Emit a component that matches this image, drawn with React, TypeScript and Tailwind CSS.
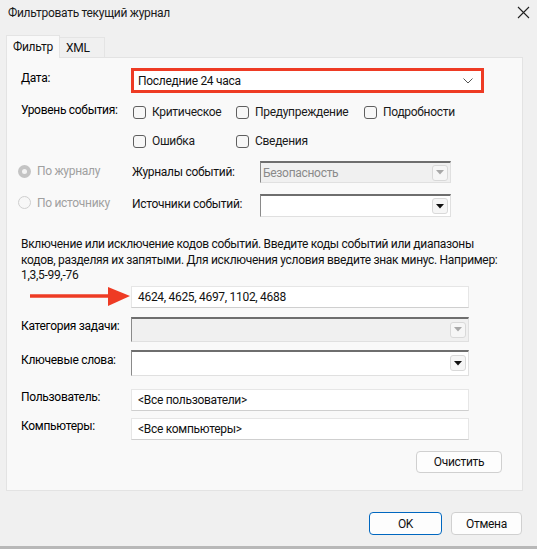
import React from "react";

const font = { fontFamily: 'Roboto, "Noto Sans", sans-serif' };

function Checkbox({ label }: { label: string }) {
  return (
    <div className="flex items-center">
      <div className="w-[13px] h-[13px] rounded-[3px] border border-[#5f5f5f] bg-[#f7f7f7] ml-[3px]" />
      <span className="ml-[6px] text-[#1a1a1a]">{label}</span>
    </div>
  );
}

function ArrowBtn({ disabled }: { disabled?: boolean }) {
  return (
    <div className="w-[16px] h-[16px] rounded-[3px] border border-[#d9d9d9] bg-[#f6f6f6] flex items-center justify-center mr-[2px]">
      <svg width="8" height="5" viewBox="0 0 8 5">
        <path d="M0 0 L8 0 L4 4.5 Z" fill={disabled ? "#a8a8a8" : "#111"} />
      </svg>
    </div>
  );
}

function Combo({ text, disabled, w, h }: { text?: string; disabled?: boolean; w: string; h: string }) {
  return (
    <div
      className={`${w} ${h} flex items-center justify-between border border-[#e0e0e0] border-t-[2px] border-t-[#6e6e6e] border-l-[#8a8a8a] ${
        disabled ? "bg-[#f0f0f0]" : "bg-white"
      }`}
    >
      <span className={`pl-[2px] ${disabled ? "text-[#8a8a8a]" : "text-[#111]"}`}>{text}</span>
      <ArrowBtn disabled={disabled} />
    </div>
  );
}

function TextBox({ text, h }: { text: string; h: string }) {
  return (
    <div className={`w-[338px] ${h} bg-white border border-[#e6e6e6] border-b-[#cfcfcf] flex items-center pl-[6px] text-[#111]`}>
      {text}
    </div>
  );
}

export default function App() {
  return (
    <div className="w-[537px] h-[549px] bg-[#f0f0f0] text-[12px] tracking-[-0.3px] text-black relative overflow-hidden" style={font}>
      {/* title bar */}
      <div className="h-[29px] flex items-center justify-between pl-[8px] pr-[7px]">
        <span className="text-[12px] text-[#1a1a1a] -mt-[4px]">Фильтровать текущий журнал</span>
        <svg width="13" height="13" viewBox="0 0 13 13" className="-mt-[5px]">
          <path d="M1 1 L12 12 M12 1 L1 12" stroke="#222" strokeWidth="1.1" />
        </svg>
      </div>

      {/* tabs */}
      <div className="flex items-end h-[28px] pl-[6px]">
        <div className="h-[23px] w-[54px] bg-[#f9f9f9] border border-[#e4e4e4] border-b-0 flex items-center justify-center text-[#111] relative z-10 -mb-px">
          Фильтр
        </div>
        <div className="h-[20px] w-[45px] bg-[#f0f0f0] border border-[#e4e4e4] border-b-0 border-l-0 flex items-center pl-[6px] text-[#111]">
          XML
        </div>
      </div>

      {/* panel */}
      <div className="ml-[6px] w-[517px] h-[434px] border border-[#e3e3e3] bg-[#f9f9f9] pl-[14px] flex flex-col">
        {/* date */}
        <div className="flex items-center mt-[10px] h-[25px]">
          <span className="w-[110px] -mt-[6px]">Дата:</span>
          <div className="w-[353px] h-[25px] border-[3px] border-[#ee3b24] bg-white flex items-center justify-between pl-[4px] pr-[8px]">
            <span className="text-[#111]">Последние 24 часа</span>
            <svg width="10" height="6" viewBox="0 0 10 6">
              <path d="M0.5 0.5 L5 5 L9.5 0.5" stroke="#555" strokeWidth="1" fill="none" />
            </svg>
          </div>
        </div>

        {/* level row 1 */}
        <div className="flex items-center mt-[9px] h-[20px]">
          <span className="w-[109px] -mt-[4px]">Уровень события:</span>
          <div className="w-[103px]"><Checkbox label="Критическое" /></div>
          <div className="w-[128px]"><Checkbox label="Предупреждение" /></div>
          <Checkbox label="Подробности" />
        </div>
        {/* level row 2 */}
        <div className="flex items-center mt-[9px] h-[20px]">
          <span className="w-[109px]" />
          <div className="w-[103px]"><Checkbox label="Ошибка" /></div>
          <Checkbox label="Сведения" />
        </div>

        {/* radio row 1 */}
        <div className="flex items-center mt-[10px] h-[22px]">
          <div className="w-[114px] flex items-center -ml-[3px] -mt-[2px]">
            <div className="w-[13px] h-[13px] rounded-full bg-[#c4c4c4] flex items-center justify-center">
              <div className="w-[5px] h-[5px] rounded-full bg-[#f4f4f4]" />
            </div>
            <span className="ml-[6px] text-[#a0a0a0]">По журналу</span>
          </div>
          <span className="w-[128px] text-[#111]">Журналы событий:</span>
          <Combo text="Безопасность" disabled w="w-[191px]" h="h-[22px]" />
        </div>

        {/* radio row 2 */}
        <div className="flex items-center mt-[11px] h-[23px]">
          <div className="w-[114px] flex items-center -ml-[3px] -mt-[6px]">
            <div className="w-[13px] h-[13px] rounded-full border border-[#cfcfcf] bg-[#f7f7f7]" />
            <span className="ml-[6px] text-[#a0a0a0]">По источнику</span>
          </div>
          <span className="w-[128px] text-[#111] -mt-[4px]">Источники событий:</span>
          <Combo w="w-[191px]" h="h-[23px]" />
        </div>

        {/* paragraph */}
        <div className="mt-[20px] leading-[15.5px] text-[#111] whitespace-nowrap">
          Включение или исключение кодов событий. Введите коды событий или диапазоны
          <br />
          кодов, разделяя их запятыми. Для исключения условия введите знак минус. Например:
          <br />
          1,3,5-99,-76
        </div>

        {/* event ids */}
        <div className="flex items-center mt-[2px] h-[22px]">
          <div className="w-[110px] flex items-center">
            <svg width="100" height="20" viewBox="0 0 100 20" className="ml-[9px]">
              <path d="M0 9 L80 9" stroke="#ee3b24" strokeWidth="3.5" />
              <path d="M78 0 L100 9 L78 19 Z" fill="#ee3b24" />
            </svg>
          </div>
          <TextBox text="4624, 4625, 4697, 1102, 4688" h="h-[22px]" />
        </div>

        {/* category */}
        <div className="flex items-start mt-[9px] h-[25px]">
          <span className="w-[110px] pt-[0px]">Категория задачи:</span>
          <Combo disabled w="w-[338px]" h="h-[25px]" />
        </div>

        {/* keywords */}
        <div className="flex items-start mt-[8px] h-[26px]">
          <span className="w-[110px] pt-[1px]">Ключевые слова:</span>
          <Combo w="w-[338px]" h="h-[26px]" />
        </div>

        {/* user */}
        <div className="flex items-start mt-[13px] h-[22px]">
          <span className="w-[110px] -mt-[1px]">Пользователь:</span>
          <TextBox text="<Все пользователи>" h="h-[22px]" />
        </div>

        {/* computers */}
        <div className="flex items-start mt-[7px] h-[22px]">
          <span className="w-[110px] -mt-[1px]">Компьютеры:</span>
          <TextBox text="<Все компьютеры>" h="h-[22px]" />
        </div>

        {/* clear */}
        <div className="flex justify-end mt-[11px] pr-[20px]">
          <div className="w-[86px] h-[22px] rounded-[4px] border border-[#d0d0d0] bg-[#fdfdfd] flex items-center justify-center text-[#111]">
            Очистить
          </div>
        </div>
      </div>

      {/* bottom buttons */}
      <div className="flex justify-end gap-[9px] pr-[15px] mt-[21px]">
        <div className="w-[73px] h-[23px] rounded-[4px] border border-[#0067c0] bg-[#fdfdfd] flex items-center justify-center text-[#111]">
          OK
        </div>
        <div className="w-[71px] h-[23px] rounded-[4px] border border-[#d0d0d0] bg-[#fdfdfd] flex items-center justify-center text-[#111]">
          Отмена
        </div>
      </div>

      <div className="absolute left-0 right-0 bottom-0 h-[3px] bg-[#b8b8b8]" />
    </div>
  );
}
